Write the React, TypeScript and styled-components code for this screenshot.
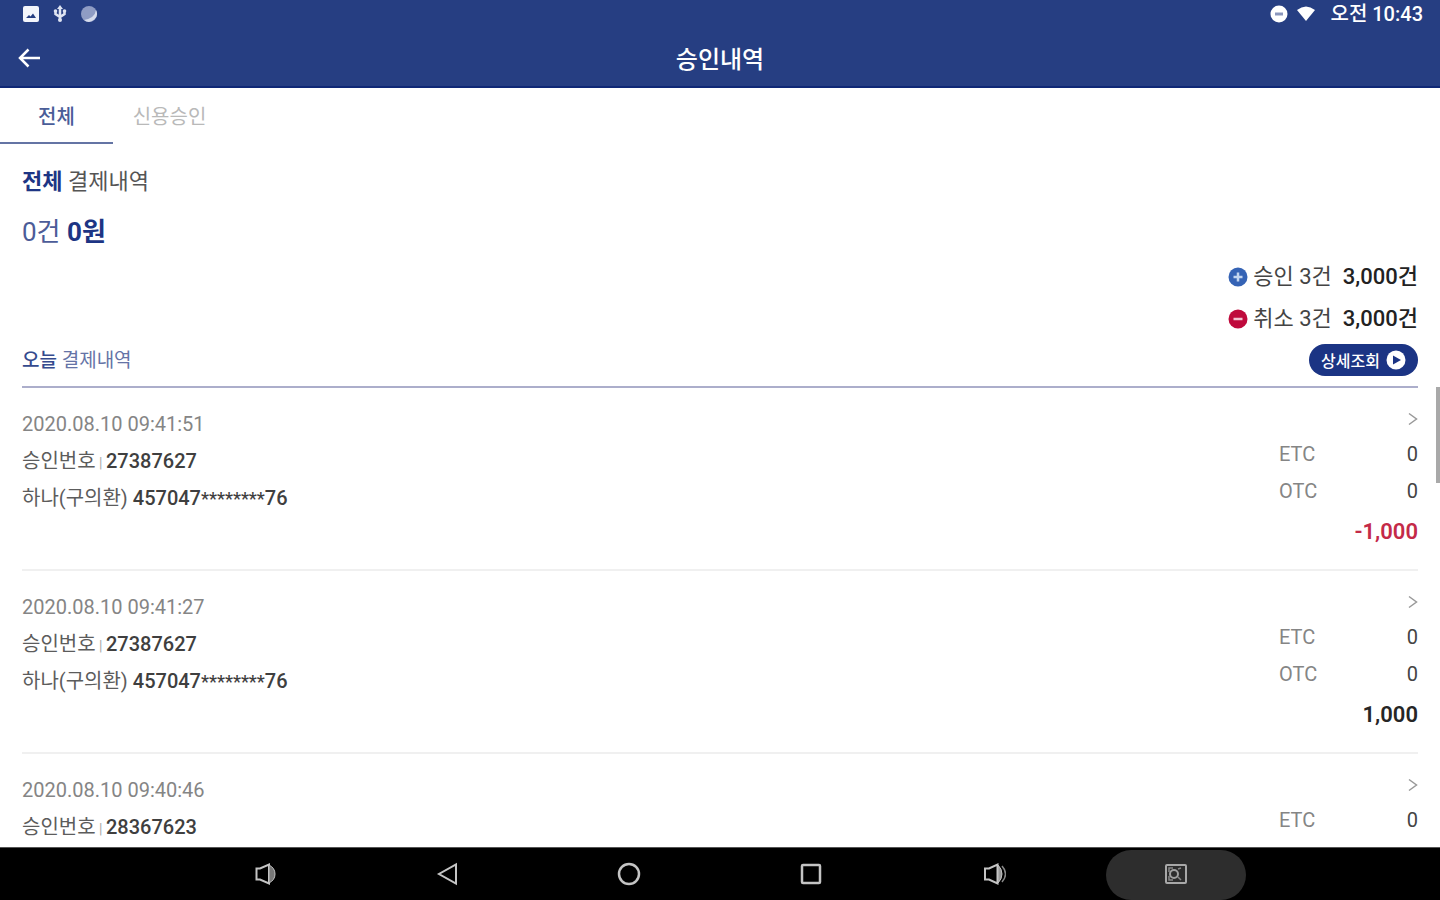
import React from "react";
import styled, { createGlobalStyle } from "styled-components";

const navy = "#263e82";
const ink = "#1d3584";

const GlobalStyle = createGlobalStyle`
  * { box-sizing: border-box; }
  body {
    margin: 0;
    background: #fff;
    color: #444;
    font-family: Roboto, "Noto Sans CJK KR", sans-serif;
    font-size: 20px;
  }
  button { font: inherit; border: 0; padding: 0; background: none; cursor: pointer; }
  h1, h2, h3, p, ul, dl, dd, dt { margin: 0; padding: 0; font-weight: 400; }
  svg { display: block; }
`;

const Screen = styled.div`
  display: flex;
  flex-direction: column;
  height: 100vh;
`;

const Top = styled.header`
  flex: none;
  background: ${navy};
  color: #fff;
  border-bottom: 2px solid #0f2876;
`;

const StatusBar = styled.div`
  display: flex;
  justify-content: space-between;
  align-items: center;
  height: 28px;
  padding: 0 17px 0 22px;
`;

const StatusGroup = styled.div<{ $gap: number }>`
  display: flex;
  align-items: center;
  gap: ${(p) => p.$gap}px;
`;

const Clock = styled.time`
  margin-left: 6px;
  font-weight: 500;
  line-height: 28px;
`;

const TitleBar = styled.div`
  display: grid;
  grid-template-columns: 60px 1fr 60px;
  align-items: center;
  height: 58px;
  padding-top: 2px;
`;

const BackButton = styled.button`
  justify-self: start;
  margin-left: 18px;
  color: #fff;
`;

const Title = styled.h1`
  padding-top: 4px;
  font-size: 24px;
  font-weight: 500;
  line-height: 36px;
  text-align: center;
`;

const Tabs = styled.nav`
  display: flex;
  flex: none;
  height: 56px;
`;

const Tab = styled.button<{ $active?: boolean }>`
  width: 113px;
  color: ${(p) => (p.$active ? "#4a5d98" : "#b9b9b9")};
  font-weight: ${(p) => (p.$active ? 500 : 400)};
  border-bottom: 2px solid ${(p) => (p.$active ? "#6474a4" : "transparent")};
`;

const Body = styled.div`
  position: relative;
  flex: 1;
  min-height: 0;
`;

const Content = styled.main`
  height: 100%;
  overflow-y: auto;
  scrollbar-width: none;
  padding: 20px 22px 0;
`;

const Heading = styled.h2`
  font-size: 22px;
  line-height: 36px;
  color: #555;
  strong { color: ${ink}; font-weight: 700; }
`;

const Total = styled.p`
  margin-top: 12px;
  font-size: 26px;
  line-height: 40px;
  color: #4c5c98;
  strong { color: ${ink}; font-weight: 700; }
`;

const Summary = styled.ul`
  display: flex;
  flex-direction: column;
  align-items: flex-end;
  margin-top: 4px;
  list-style: none;
`;

const SummaryLine = styled.li`
  display: flex;
  align-items: center;
  font-size: 22px;
  line-height: 42px;
  svg { margin-right: 5px; }
  strong { margin-left: 11px; color: #222; font-weight: 500; }
`;

const SectionHead = styled.div`
  display: flex;
  justify-content: space-between;
  align-items: center;
  padding: 4px 0 10px;
  border-bottom: 2px solid #acaecb;
`;

const SectionTitle = styled.h3`
  padding-top: 2px;
  font-size: 19px;
  line-height: 30px;
  color: #6573a6;
  strong { color: #354a8e; font-weight: 500; }
`;

const DetailButton = styled.button`
  display: flex;
  align-items: center;
  gap: 6px;
  height: 32px;
  padding: 0 12px;
  border-radius: 16px;
  background: #1b3484;
  color: #fff;
  font-size: 16px;
  font-weight: 500;
`;

const List = styled.ul`
  list-style: none;
`;

const Item = styled.li`
  display: flex;
  justify-content: space-between;
  height: 183px;
  border-bottom: 2px solid #f0f0f0;
`;

const Info = styled.div`
  padding-top: 18px;
  line-height: 37px;
`;

const DateLine = styled.p`
  color: #858585;
`;

const InfoLine = styled.p`
  color: #5c5c5c;
  strong { color: #3f3f3f; font-weight: 500; }
`;

const Divider = styled.span`
  font-size: 14px;
  line-height: 1;
  color: #aaa;
  white-space: pre;
`;

const Mask = styled.span`
  font-size: 18px;
  line-height: 1;
`;

const Side = styled.div`
  display: flex;
  flex-direction: column;
  width: 139px;
  padding-top: 14px;
`;

const OpenButton = styled.button`
  display: flex;
  align-items: center;
  justify-content: flex-end;
  height: 34px;
  color: #999;
`;

const Split = styled.dl`
  display: grid;
  grid-template-columns: 1fr auto;
  line-height: 37px;
  dt { color: #858585; }
  dd { color: #444; text-align: right; }
`;

const Amount = styled.p<{ $negative: boolean }>`
  font-size: 22px;
  font-weight: 600;
  line-height: 44px;
  text-align: right;
  color: ${(p) => (p.$negative ? "#c42a48" : "#262626")};
`;

const ScrollThumb = styled.div`
  position: absolute;
  top: 243px;
  right: 0;
  width: 4px;
  height: 96px;
  background: #a9a9a9;
`;

const SystemNav = styled.nav`
  display: grid;
  grid-template-columns: repeat(6, 1fr);
  flex: none;
  height: 53px;
  padding: 2px 12% 0;
  background: #000;
  border-top: 1px solid #555;
`;

const NavButton = styled.button<{ $pressed?: boolean }>`
  display: flex;
  align-items: center;
  justify-content: center;
  justify-self: center;
  width: 140px;
  padding-bottom: 2px;
  border-radius: 25px;
  color: #c4c4c4;
  background: ${(p) => (p.$pressed ? "#2d2d2d" : "transparent")};
`;

const stroke = { fill: "none", stroke: "currentColor", strokeWidth: 2 };

const navItems = [
  {
    label: "볼륨 작게",
    icon: (
      <>
        <path d="M4.500 6.500H8L17 2.500V21.500L8 17.500H4.500Z" {...stroke} />
        <path d="M17 3Q23 6 23 12T17 21Z" fill="#777" stroke="currentColor" />
      </>
    ),
  },
  { label: "뒤로", icon: <path d="M22 2.500V21.500L5 12Z" {...stroke} /> },
  { label: "홈", icon: <circle cx="12" cy="12" r="10" {...stroke} strokeWidth={2.5} /> },
  { label: "최근 앱", icon: <rect x="3" y="3" width="18" height="18" rx="1" {...stroke} strokeWidth={2.5} /> },
  {
    label: "볼륨 크게",
    icon: (
      <>
        <path d="M3 6.500H7L15.500 2.500V21.500L7 17.500H3Z" {...stroke} />
        <path d="M16 3Q20 7 20 12T16 21Z" fill="#999" stroke="currentColor" />
        <path d="M20 4Q23.500 8 23.500 12T20 20" fill="none" stroke="#888" strokeWidth="1.5" />
      </>
    ),
  },
  {
    label: "화면 캡처",
    icon: (
      <>
        <rect x="2" y="3" width="20" height="18" rx="1" {...stroke} stroke="#a8a8a8" />
        <circle cx="10" cy="12" r="4" {...stroke} stroke="#a0a0a0" />
        <path d="M5 10V6H9M5 14V18H9M14 7L17 6M14 15L17 18" {...stroke} stroke="#888" strokeWidth={1.5} />
      </>
    ),
  },
];

const records = [
  { date: "2020.08.10 09:41:51", no: "27387627", amount: "-1,000" },
  { date: "2020.08.10 09:41:27", no: "27387627", amount: "1,000" },
  { date: "2020.08.10 09:40:46", no: "28367623", amount: "1,000" },
];

function Sign({ color, plus }: { color: string; plus?: boolean }) {
  return (
    <svg width="20" height="20" viewBox="0 0 20 20" aria-hidden="true">
      <circle cx="10" cy="10" r="9.5" fill={color} />
      <path d={plus ? "M10 5.5V14.5M5.5 10H14.5" : "M5.5 10H14.5"} stroke={plus ? "#c3d5f0" : "#f3c3d0"} strokeWidth="2.5" />
    </svg>
  );
}

export default function App() {
  return (
    <Screen>
      <GlobalStyle />
      <Top>
        <StatusBar>
          <StatusGroup $gap={11}>
            <svg width="18" height="18" viewBox="0 0 18 18">
              <rect x="1" y="1" width="16" height="16" rx="2" fill="#f3f5fb" />
              <path d="M4 13L7 10L8.500 11.500L11 8.500L14 13Z" fill={navy} />
            </svg>
            <svg width="18" height="18" viewBox="0 0 18 18" fill="#dfe4f2" stroke="#dfe4f2">
              <path d="M9 3V15M4.500 6V9L9 12L13.500 9V6" fill="none" strokeWidth="2.500" />
              <path d="M9 0L12 4H6Z" stroke="none" />
              <circle cx="9" cy="15" r="2" stroke="none" />
              <circle cx="4.500" cy="6" r="1.800" stroke="none" />
              <circle cx="13.500" cy="6" r="1.800" stroke="none" />
            </svg>
            <svg width="18" height="18" viewBox="0 0 18 18">
              <circle cx="9" cy="9" r="8" fill="#8f9cc4" />
              <path d="M4 15A8 8 0 0 0 16 5Q15 13 4 15Z" fill="#d5dbec" />
            </svg>
          </StatusGroup>
          <StatusGroup $gap={9}>
            <svg width="18" height="18" viewBox="0 0 18 18">
              <circle cx="9" cy="9" r="8.500" fill="#fff" />
              <path d="M5 9H13" stroke="#8a96bc" strokeWidth="3" />
            </svg>
            <svg width="18" height="18" viewBox="0 0 18 18">
              <path d="M0 5Q9 -2 18 5L9 16Z" fill="#fff" />
            </svg>
            <Clock>오전 10:43</Clock>
          </StatusGroup>
        </StatusBar>
        <TitleBar>
          <BackButton aria-label="뒤로 가기">
            <svg width="22" height="22" viewBox="0 0 22 22">
              <path d="M22 11H2.500M10.500 2.500L2 11L10.500 19.500" {...stroke} strokeWidth={2.5} />
            </svg>
          </BackButton>
          <Title>승인내역</Title>
        </TitleBar>
      </Top>

      <Tabs>
        <Tab $active>전체</Tab>
        <Tab>신용승인</Tab>
      </Tabs>

      <Body>
        <Content>
          <Heading>
            <strong>전체</strong> 결제내역
          </Heading>
          <Total>
            0건 <strong>0원</strong>
          </Total>
          <Summary>
            <SummaryLine>
              <Sign color="#3563b5" plus />
              승인 3건 <strong>3,000건</strong>
            </SummaryLine>
            <SummaryLine>
              <Sign color="#bf0a3c" />
              취소 3건 <strong>3,000건</strong>
            </SummaryLine>
          </Summary>
          <SectionHead>
            <SectionTitle>
              <strong>오늘</strong> 결제내역
            </SectionTitle>
            <DetailButton>
              상세조회
              <svg width="20" height="20" viewBox="0 0 20 20" aria-hidden="true">
                <circle cx="10" cy="10" r="9.500" fill="#fff" />
                <path d="M7 5.500L15 10L7 14.500Z" fill="#1b3484" />
              </svg>
            </DetailButton>
          </SectionHead>
          <List>
            {records.map((r) => (
              <Item key={r.date}>
                <Info>
                  <DateLine>{r.date}</DateLine>
                  <InfoLine>
                    승인번호<Divider> | </Divider>
                    <strong>{r.no}</strong>
                  </InfoLine>
                  <InfoLine>
                    하나(구의환){" "}
                    <strong>
                      457047<Mask>********</Mask>76
                    </strong>
                  </InfoLine>
                </Info>
                <Side>
                  <OpenButton aria-label="상세 보기">
                    <svg width="10" height="14" viewBox="0 0 10 14">
                      <path d="M1 1.500L8.500 7L1 12.500" {...stroke} strokeWidth={1.5} />
                    </svg>
                  </OpenButton>
                  <Split>
                    <dt>ETC</dt>
                    <dd>0</dd>
                    <dt>OTC</dt>
                    <dd>0</dd>
                  </Split>
                  <Amount $negative={r.amount.startsWith("-")}>{r.amount}</Amount>
                </Side>
              </Item>
            ))}
          </List>
        </Content>
        <ScrollThumb />
      </Body>

      <SystemNav>
        {navItems.map((n, i) => (
          <NavButton key={n.label} aria-label={n.label} $pressed={i === 5}>
            <svg width="24" height="24" viewBox="0 0 24 24">
              {n.icon}
            </svg>
          </NavButton>
        ))}
      </SystemNav>
    </Screen>
  );
}
